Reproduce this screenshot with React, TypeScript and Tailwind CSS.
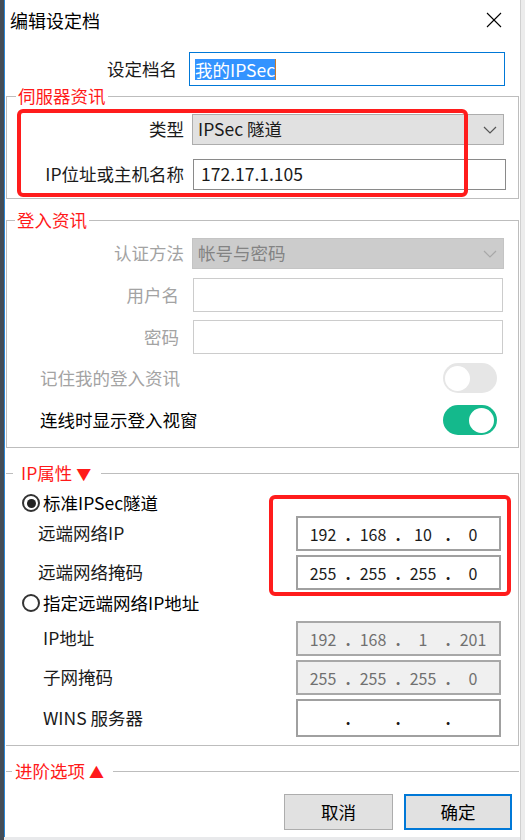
import { Fragment } from "react";

const font = "font-['Noto_Sans_CJK_SC','Noto_Sans',sans-serif]";

function Chevron({ color }: { color: string }) {
  return (
    <svg width="14" height="8" viewBox="0 0 14 8" className="mr-[6px]">
      <polyline points="1,1 7,7 13,1" fill="none" stroke={color} strokeWidth="1.2" />
    </svg>
  );
}

function Toggle({ on }: { on: boolean }) {
  return on ? (
    <div className="w-[54px] h-[30px] rounded-full bg-[#14b98c] flex items-center justify-end pr-[3px]">
      <div className="w-[25px] h-[25px] rounded-full bg-white" />
    </div>
  ) : (
    <div className="w-[54px] h-[30px] rounded-full bg-[#e6e6e6] flex items-center pl-[2px]">
      <div className="w-[25px] h-[25px] rounded-full bg-white" />
    </div>
  );
}

function IpBox({ parts, disabled }: { parts: string[]; disabled?: boolean }) {
  return (
    <div
      className={`w-[205px] h-full border-2 flex items-center pl-px text-[16px] ${
        disabled ? "bg-[#f0f0f0] border-[#a8a8a8] text-[#707070]" : "bg-white border-[#a0a0a0] text-[#1a1a1a]"
      }`}
    >
      {parts.map((p, i) => (
        <Fragment key={i}>
          {i > 0 && <span className="w-[2px] flex justify-center font-bold">.</span>}
          <span className="w-[48px] text-center">{p}</span>
        </Fragment>
      ))}
    </div>
  );
}

function Radio({ checked }: { checked: boolean }) {
  return (
    <div className="w-[18px] h-[18px] rounded-full border-2 border-[#333] bg-white flex items-center justify-center">
      {checked && <div className="w-[9px] h-[9px] rounded-full bg-[#222]" />}
    </div>
  );
}

export default function App() {
  return (
    <div className={`w-[525px] h-[840px] flex bg-[#e8e9eb] overflow-hidden ${font} text-[17.5px] text-[#1a1a1a]`}>
      <div className="w-[4px] h-full bg-[#434c56]" />
      <div className="relative w-[516px] h-[837px] bg-white border-l border-[#2b86d6] flex flex-col">
        {/* title bar */}
        <div className="h-[40px] flex items-center justify-between pl-[5px] pr-[18px]">
          <span className="text-[18px] leading-[24px] text-black">编辑设定档</span>
          <svg width="16" height="16" viewBox="0 0 16 16">
            <line x1="1" y1="1" x2="15" y2="15" stroke="#000" strokeWidth="1.1" />
            <line x1="15" y1="1" x2="1" y2="15" stroke="#000" strokeWidth="1.1" />
          </svg>
        </div>

        {/* profile name */}
        <div className="mt-[12px] h-[34px] flex items-center">
          <span className="w-[172px] text-right">设定档名</span>
          <div className="ml-[12px] mr-[15px] flex-1 h-full border border-[#0078d7] flex items-center pl-[5px]">
            <span className="bg-[#3393ff] text-white leading-[21px]">我的IPSec</span>
            <span className="w-px h-[21px] bg-[#c87a2a]" />
          </div>
        </div>

        {/* server info */}
        <fieldset className="mx-[1px] border border-[#bdbdbd]">
          <legend className="ml-[9px] px-[2px] leading-[20px] text-[#ff1a1a]">伺服器资讯</legend>
          <div className="flex flex-col pt-[8px] pb-[8px]">
            <div className="h-[31px] flex items-center">
              <span className="w-[177px] text-right">类型</span>
              <div className="ml-[8px] mr-[14px] flex-1 h-full bg-[#e1e1e1] border border-[#adadad] flex items-center justify-between pl-[5px]">
                <span>IPSec 隧道</span>
                <Chevron color="#555" />
              </div>
            </div>
            <div className="mt-[14px] h-[31px] flex items-center">
              <span className="w-[177px] text-right">IP位址或主机名称</span>
              <div className="ml-[9px] mr-[12px] flex-1 h-full border border-[#8a8a8a] flex items-center pl-[7px]">
                172.17.1.105
              </div>
            </div>
          </div>
        </fieldset>

        {/* login info */}
        <fieldset className="mx-[1px] mt-[11px] border border-[#bdbdbd]">
          <legend className="ml-[8px] px-[2px] leading-[20px] text-[#ff1a1a]">登入资讯</legend>
          <div className="flex flex-col pt-[8px] pb-[12px]">
            <div className="h-[31px] flex items-center">
              <span className="w-[177px] text-right text-[#a3a3a3]">认证方法</span>
              <div className="ml-[8px] mr-[14px] flex-1 h-full bg-[#cccccc] border border-[#c4c4c4] flex items-center justify-between pl-[5px] text-[#838383]">
                <span>帐号与密码</span>
                <Chevron color="#a8a8a8" />
              </div>
            </div>
            <div className="mt-[9px] h-[34px] flex items-center">
              <span className="w-[172px] text-right text-[#a3a3a3]">用户名</span>
              <div className="ml-[14px] mr-[15px] flex-1 h-full border border-[#cccccc]" />
            </div>
            <div className="mt-[8px] h-[34px] flex items-center">
              <span className="w-[172px] text-right text-[#a3a3a3]">密码</span>
              <div className="ml-[14px] mr-[15px] flex-1 h-full border border-[#cccccc]" />
            </div>
            <div className="mt-[9px] h-[30px] flex items-center justify-between pl-[33px] pr-[21px]">
              <span className="text-[#a3a3a3]">记住我的登入资讯</span>
              <Toggle on={false} />
            </div>
            <div className="mt-[12px] h-[30px] flex items-center justify-between pl-[33px] pr-[21px]">
              <span className="text-black">连线时显示登入视窗</span>
              <Toggle on={true} />
            </div>
          </div>
        </fieldset>

        {/* IP properties */}
        <fieldset className="ml-[1px] mr-[1px] mt-[15px] border border-l-0 border-[#bdbdbd]">
          <legend className="ml-[7px] pl-[8px] pr-[10px] leading-[20px] text-[#ff1a1a]">
            IP属性 <span className="text-[15px]">▼</span>
          </legend>
          <div className="flex flex-col pt-[8px] pb-[8px]">
            <div className="h-[22px] flex items-center gap-[3px] pl-[16px]">
              <Radio checked={true} />
              <span className="text-black">标准IPSec隧道</span>
            </div>
            <div className="mt-[2px] h-[35px] flex items-center justify-between pl-[32px] pr-[17px]">
              <span>远端网络IP</span>
              <IpBox parts={["192", "168", "10", "0"]} />
            </div>
            <div className="mt-[4px] h-[35px] flex items-center justify-between pl-[32px] pr-[17px]">
              <span>远端网络掩码</span>
              <IpBox parts={["255", "255", "255", "0"]} />
            </div>
            <div className="mt-[2px] h-[22px] flex items-center gap-[3px] pl-[16px]">
              <Radio checked={false} />
              <span className="text-black">指定远端网络IP地址</span>
            </div>
            <div className="mt-[7px] h-[35px] flex items-center justify-between pl-[37px] pr-[17px]">
              <span>IP地址</span>
              <IpBox parts={["192", "168", "1", "201"]} disabled />
            </div>
            <div className="mt-[4px] h-[35px] flex items-center justify-between pl-[37px] pr-[17px]">
              <span>子网掩码</span>
              <IpBox parts={["255", "255", "255", "0"]} disabled />
            </div>
            <div className="mt-[4px] h-[38px] flex items-center justify-between pl-[37px] pr-[17px]">
              <span>WINS 服务器</span>
              <IpBox parts={["", "", "", ""]} />
            </div>
          </div>
        </fieldset>

        {/* advanced (collapsed) */}
        <fieldset className="mx-[1px] mt-[15px] border-t border-[#bdbdbd]">
          <legend className="ml-[6px] pl-[3px] pr-[9px] leading-[20px] text-[#ff1a1a]">
            进阶选项 <span className="text-[15px]">▲</span>
          </legend>
        </fieldset>

        {/* buttons */}
        <div className="mt-[12px] flex justify-end gap-[11px] pr-[8px]">
          <button className="w-[109px] h-[36px] bg-[#e1e1e1] border border-[#adadad] text-black">取消</button>
          <button className="w-[108px] h-[36px] bg-[#e1e1e1] border-2 border-[#0078d7] text-black">确定</button>
        </div>

        {/* annotation boxes */}
        <div className="absolute left-[12px] top-[109px] w-[451px] h-[88px] border-[4px] border-[#ff1c1c] rounded-[6px]" />
        <div className="absolute left-[264px] top-[495px] w-[242px] h-[101px] border-[4px] border-[#ff1c1c] rounded-[6px]" />
      </div>
      <div className="flex-1 h-full bg-[#ececec] border-l border-[#d0d0d0]" />
    </div>
  );
}
